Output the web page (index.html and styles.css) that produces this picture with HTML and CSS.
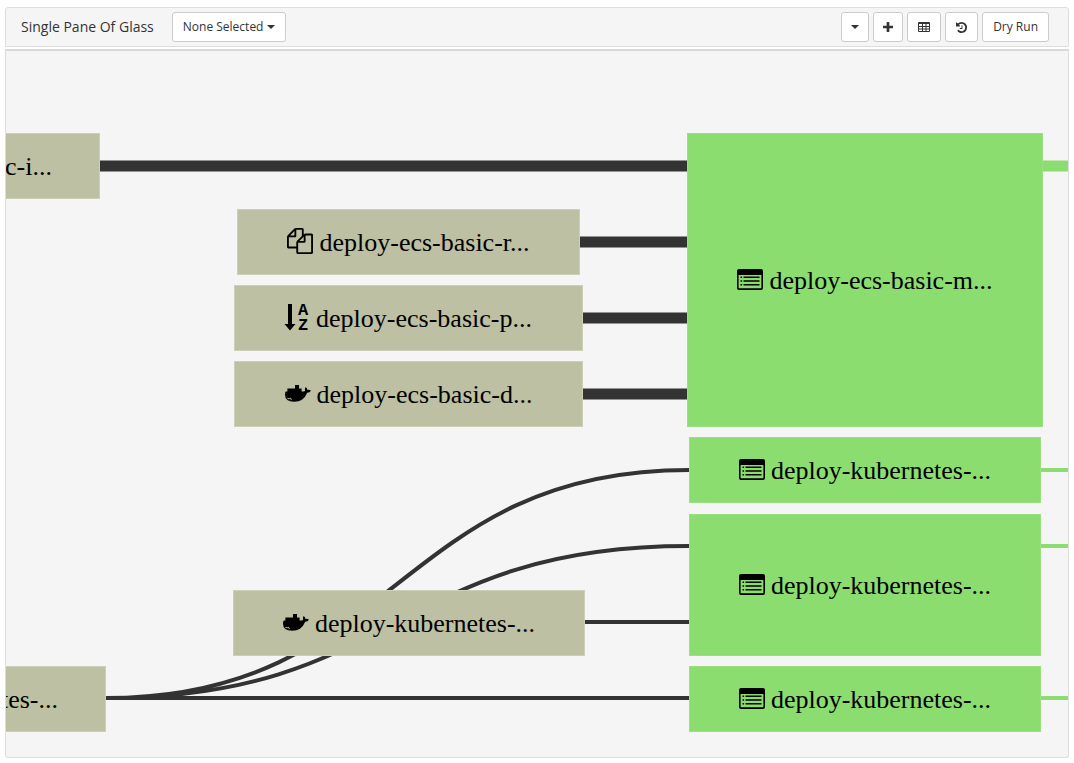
FILE: index.html
```html
<!DOCTYPE html>
<html lang="en">
<head>
<meta charset="utf-8">
<title>Single Pane Of Glass</title>
<link rel="stylesheet" href="styles.css">
</head>
<body>
<svg class="symbols" aria-hidden="true">
  <symbol id="list" viewBox="0 0 26 21">
    <path fill-rule="evenodd" d="M2 0H24Q26 0 26 2V19Q26 21 24 21H2Q0 21 0 19V2Q0 0 2 0ZM1.6 6V18.5Q1.6 19.3 2.4 19.3H23.6Q24.4 19.3 24.4 18.5V6Z"/>
    <path d="M3.5 7.4h1.6v1.5H3.5zM6.5 7.4h16v1.5h-16zM3.5 11.2h1.6v1.5H3.5zM6.5 11.2h16v1.5h-16zM3.5 15h1.6v1.5H3.5zM6.5 15h16v1.5h-16z"/>
  </symbol>
  <symbol id="files" viewBox="0 0 1792 1792">
    <path d="M1696 384q40 0 68 28t28 68v1216q0 40-28 68t-68 28h-960q-40 0-68-28t-28-68v-288h-544q-40 0-68-28t-28-68v-672q0-40 20-88t48-76l408-408q28-28 76-48t88-20h416q40 0 68 28t28 68v328q68-40 128-40h416zm-544 213l-299 299h299v-299zm-640-384l-299 299h299v-299zm196 647l316-316v-416h-384v416q0 40-28 68t-68 28h-416v640h512v-256q0-40 20-88t48-76zm956 804v-1152h-384v416q0 40-28 68t-68 28h-416v640h896z"/>
  </symbol>
  <symbol id="docker" viewBox="0 0 26 17">
    <path d="M10 0h4v3.4h2.6v3.2h1.8q1.2-.2 1.7-.6-.7-2 .5-4 1.6 1.2 1.9 2.9 1.9-.3 3.5.5-1 2.2-3.8 2.3Q18.6 16.8 9 16.8 0 16.8 0 9.6q0-1.8.8-3h1.6V3.6h7.6z"/>
    <path class="whale-detail" d="M2.4 13.6q2 .4 3.6-.4M5.6 15.2q.2-1 1.2-1.1"/>
  </symbol>
</svg>

<header class="toolbar">
  <span class="title">Single Pane Of Glass</span>
  <button type="button" class="btn">None Selected <span class="caret"></span></button>
  <div class="actions">
    <button type="button" class="btn narrow" aria-label="More"><span class="caret"></span></button>
    <button type="button" class="btn narrow" aria-label="Add"><svg class="glyph plus" viewBox="192 128 1408 1408"><path d="M1600 736v192q0 40-28 68t-68 28h-416v416q0 40-28 68t-68 28h-192q-40 0-68-28t-28-68v-416h-416q-40 0-68-28t-28-68v-192q0-40 28-68t68-28h416v-416q0-40 28-68t68-28h192q40 0 68 28t28 68v416h416q40 0 68 28t28 68z"/></svg></button>
    <button type="button" class="btn" aria-label="Table"><svg class="glyph grid" viewBox="0 0 12 12"><path fill-rule="evenodd" d="M1 1H11Q12 1 12 2V10Q12 11 11 11H1Q0 11 0 10V2Q0 1 1 1ZM1 3V5H4V3ZM5 3V5H7.5V3ZM8.5 3V5H11V3ZM1 6V7.5H4V6ZM5 6V7.5H7.5V6ZM8.5 6V7.5H11V6ZM1 8.5V10H4V8.5ZM5 8.5V10H7.5V8.5ZM8.5 8.5V10H11V8.5Z"/></svg></button>
    <button type="button" class="btn" aria-label="History"><svg class="glyph" viewBox="128 128 1536 1536"><path d="M1664 896q0 156-61 298t-164 245-245 164-298 61q-172 0-327-72.5t-264-204.5q-7-10-6.5-22.5t8.5-20.5l137-138q10-9 25-9 16 2 23 12 73 95 179 147t225 52q104 0 198.5-40.5t163.5-109.5 109.5-163.5 40.5-198.5-40.5-198.5-109.5-163.5-163.5-109.5-198.5-40.5q-98 0-188 35.5t-160 101.5l137 138q31 30 14 69-17 40-59 40h-448q-26 0-45-19t-19-45v-448q0-42 40-59 39-17 69 14l130 129q107-101 244.5-156.5t284.5-55.5q156 0 298 61t245 164 164 245 61 298zm-640-288v448q0 14-9 23t-23 9h-320q-14 0-23-9t-9-23v-64q0-14 9-23t23-9h224v-352q0-14 9-23t23-9h64q14 0 23 9t9 23z"/></svg></button>
    <button type="button" class="btn">Dry Run</button>
  </div>
</header>

<main class="canvas">
  <svg class="edges" aria-hidden="true">
    <g class="thick"><path d="M93 115H682M573 191H682M576 267H682M576 343H682"/><path class="green" d="M1036 115H3000"/></g>
    <g class="thin"><path d="M100 647C391 647 391 419 683 419M100 647C391 647 391 495 683 495M100 647H683M578 571H683"/><path class="green" d="M1035 419H3000M1035 495H3000M1035 647H3000"/></g>
  </svg>
  <div class="node cut cut-ecs"><span>c-i...</span></div>
  <div class="node res">
    <svg class="icon-files"><use href="#files"/></svg><span>deploy-ecs-basic-r...</span>
  </div>
  <div class="node param">
    <svg class="icon-sort" viewBox="0 0 25 27"><path d="M3 0H7V20H10.5L5 26.5-.5 20H3Z"/><text x="18" y="11" text-anchor="middle">A</text><text x="18" y="26" text-anchor="middle">Z</text></svg><span>deploy-ecs-basic-p...</span>
  </div>
  <div class="node image">
    <svg class="icon-docker"><use href="#docker"/></svg><span>deploy-ecs-basic-d...</span>
  </div>
  <div class="node kube-image">
    <svg class="icon-docker"><use href="#docker"/></svg><span>deploy-kubernetes-...</span>
  </div>
  <div class="node cut cut-kube"><span>tes-...</span></div>
  <div class="node job ecs-job">
    <svg class="icon-list"><use href="#list"/></svg><span>deploy-ecs-basic-m...</span>
  </div>
  <div class="node job kube-a">
    <svg class="icon-list"><use href="#list"/></svg><span>deploy-kubernetes-...</span>
  </div>
  <div class="node job kube-b">
    <svg class="icon-list"><use href="#list"/></svg><span>deploy-kubernetes-...</span>
  </div>
  <div class="node job kube-c">
    <svg class="icon-list"><use href="#list"/></svg><span>deploy-kubernetes-...</span>
  </div>
</main>
</body>
</html>
```

FILE: styles.css
```css
* { box-sizing: border-box; }

body {
  margin: 0;
  padding: 7px 5px 5px;
  min-height: 100vh;
  display: flex;
  flex-direction: column;
  background: #fff;
  color: #333;
  font-family: "Open Sans", sans-serif;
}

.symbols { position: absolute; width: 0; height: 0; }

.toolbar {
  display: flex;
  align-items: center;
  gap: 18px;
  height: 40px;
  padding: 0 19px 0 15px;
  background: #f5f5f5;
  border: 1px solid #ddd;
  border-radius: 3px 3px 0 0;
}

.title { font-size: 14px; line-height: 20px; }

.actions { display: flex; gap: 4px; margin-left: auto; }

.btn {
  display: flex;
  align-items: center;
  justify-content: center;
  gap: 4px;
  height: 30px;
  padding: 0 10px;
  border: 1px solid #ccc;
  border-radius: 3px;
  background: #fff;
  color: #333;
  font: 12px/18px "Open Sans", sans-serif;
}

.narrow { padding: 0 9px; }

.caret {
  border-top: 4px solid #333;
  border-left: 4px solid transparent;
  border-right: 4px solid transparent;
}

.glyph { width: 11px; height: 11px; fill: #333; }
.plus { width: 10px; height: 10px; }
.grid { width: 12px; height: 12px; }

.canvas {
  position: relative;
  flex: 1;
  min-height: 708px;
  margin-top: 2px;
  overflow: hidden;
  background: #f5f5f5;
  border: 1px solid #ddd;
  border-top: 2px solid #d8d8d8;
  border-radius: 0 0 3px 3px;
}

.edges {
  position: absolute;
  inset: 0;
  width: 100%;
  height: 100%;
  fill: none;
  stroke: #333;
}

.thick { stroke-width: 11px; }
.thin { stroke-width: 4px; }
.green { stroke: #8cdd6f; }

.node {
  position: absolute;
  display: flex;
  align-items: center;
  justify-content: center;
  gap: 6px;
  height: 66px;
  background: #bdc0a3;
  border: 1px solid #cdd0b8;
  color: #000;
  font: 26px/30px "Liberation Serif", serif;
  white-space: nowrap;
}

.job { background: #8cdd6f; border-color: #9ae081; }

.cut { left: 0; justify-content: flex-end; border-left: 0; padding-right: 47px; }
.cut-ecs { top: 82px; width: 94px; }
.cut-kube { top: 615px; width: 100px; }

.res { left: 231px; top: 158px; width: 343px; }
.param { left: 228px; top: 234px; width: 349px; }
.image { left: 228px; top: 310px; width: 349px; }
.kube-image { left: 227px; top: 539px; width: 352px; }

.ecs-job { left: 681px; top: 82px; width: 356px; height: 294px; }
.kube-a { left: 683px; top: 386px; width: 352px; }
.kube-b { left: 683px; top: 463px; width: 352px; height: 142px; }
.kube-c { left: 683px; top: 615px; width: 352px; }

.node span { padding-top: 2px; }
.node svg { flex: none; margin-bottom: 2px; overflow: visible; }
.icon-list { width: 26px; height: 21px; }
.icon-files { width: 26px; height: 26px; }
.icon-docker { width: 26px; height: 17px; }
.icon-sort { width: 25px; height: 27px; font: bold 17px/17px "Liberation Mono", monospace; }
.whale-detail { fill: none; stroke: #bdc0a3; stroke-width: 1px; }
```
